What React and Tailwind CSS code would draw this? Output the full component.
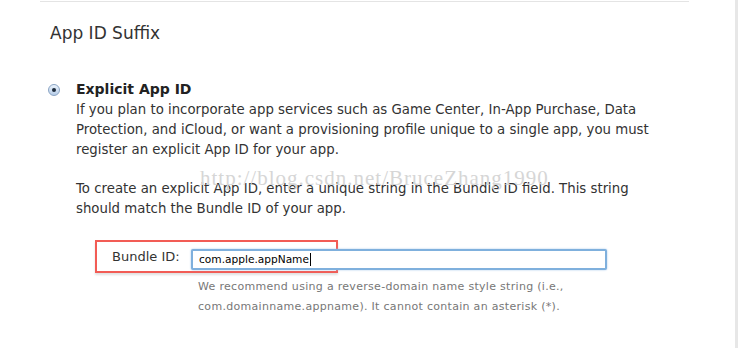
export default function App() {
  return (
    <div className="flex h-[348px] w-[738px] bg-white overflow-hidden" style={{ fontFamily: '"DejaVu Sans", sans-serif' }}>
      <div className="relative flex-1">
        {/* top rule */}
        <div className="ml-[40px] mt-px h-px w-[649px] bg-[#e4e4e4]" />

        <h2 className="ml-[50px] mt-[20px] text-[17px] leading-[22px] text-[#333]">App ID Suffix</h2>

        <div className="mt-[35px] ml-[48px] flex items-start gap-[16px]">
          <span className="mt-[5px] flex h-[12px] w-[12px] items-center justify-center rounded-full border border-[#8aa4c4] bg-gradient-to-b from-[#eaf2fb] to-[#b7cde8]">
            <span className="h-[4px] w-[4px] rounded-full bg-[#1d2b3c]" />
          </span>
          <div className="text-[13.3px] leading-[20px] text-[#333]">
            <p className="font-bold text-[14px] text-[#222]">Explicit App ID</p>
            <p className="mt-px w-[588px]">
              If you plan to incorporate app services such as Game Center, In-App Purchase, Data Protection, and iCloud, or want a provisioning profile unique to a single app, you must register an explicit App ID for your app.
            </p>
            <p className="mt-[19px] w-[588px]">
              To create an explicit App ID, enter a unique string in the Bundle ID field. This string should match the Bundle ID of your app.
            </p>
          </div>
        </div>

        <div className="ml-[95px] mt-[21px] flex items-center">
          <div className="flex h-[33px] w-[243px] items-center border-2 border-[#f25c55] pl-[15px] shadow-[0_2px_2px_rgba(0,0,0,0.12)]">
            <span className="text-[13px] text-[#333]">Bundle ID:</span>
          </div>
        </div>

        <div className="absolute left-[191px] top-[249px] flex h-[21px] w-[416px] items-center rounded-[2px] border-2 border-[#7fb0dd] bg-white pl-[6px] text-[10.6px] text-black shadow-[0_0_2px_#9cc3e8]">
          com.apple.appName<span className="ml-px h-[13px] w-px bg-black" />
        </div>

        <p className="ml-[198px] mt-[4px] w-[400px] text-[11px] leading-[20px] tracking-[0.3px] text-[#777]">
          We recommend using a reverse-domain name style string (i.e., com.domainname.appname). It cannot contain an asterisk (*).
        </p>

        <div className="pointer-events-none absolute left-[200px] top-[166px] text-[21px] leading-[24px] tracking-[1px] text-[#d6d6d6]" style={{ fontFamily: '"Liberation Serif", serif' }}>
          http://blog.csdn.net/BruceZhang1990
        </div>
      </div>
      <div className="h-full w-[3px] bg-[#e7e7e7]" />
    </div>
  );
}
